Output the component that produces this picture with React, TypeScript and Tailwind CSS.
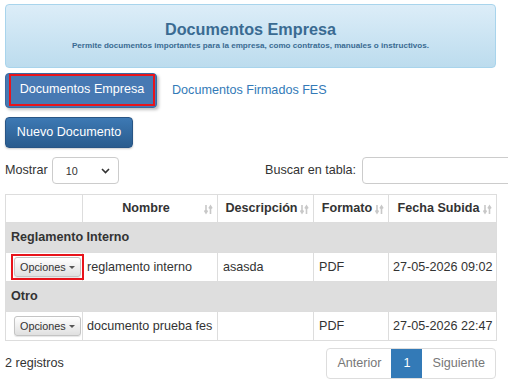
import React from "react";

type Row = { nombre: string; descripcion: string; formato: string; fecha: string; marked?: boolean };
type Group = { titulo: string; rows: Row[] };

const groups: Group[] = [
  {
    titulo: "Reglamento Interno",
    rows: [{ nombre: "reglamento interno", descripcion: "asasda", formato: "PDF", fecha: "27-05-2026 09:02", marked: true }],
  },
  {
    titulo: "Otro",
    rows: [{ nombre: "documento prueba fes", descripcion: "", formato: "PDF", fecha: "27-05-2026 22:47" }],
  },
];

function SortIcon() {
  return (
    <svg width="9" height="11" viewBox="0 0 9 11" className="absolute right-[4px] top-[9px]">
      <path d="M2 1v7M0.5 6.5L2 9l1.5-2.5" stroke="#c8c8c8" strokeWidth="1.6" fill="none" />
      <path d="M6.5 10V3M5 4.5L6.5 2 8 4.5" stroke="#c8c8c8" strokeWidth="1.6" fill="none" />
    </svg>
  );
}

function Opciones({ marked }: { marked?: boolean }) {
  return (
    <div className={`inline-flex ${marked ? "border-2 border-[#e8141b] p-[1px]" : "p-[3px]"}`}>
      <div className="flex items-center gap-[3px] h-[20px] px-[5px] border border-[#c4c4c4] rounded-[3px] bg-gradient-to-b from-white to-[#e0e0e0] text-[10.8px] text-[#333] shadow-[0_1px_1px_rgba(0,0,0,0.1)]">
        Opciones
        <span className="border-x-[3px] border-x-transparent border-t-[3px] border-t-[#555] mt-[1px]" />
      </div>
    </div>
  );
}

export default function App() {
  return (
    <div className="w-[508px] h-[381px] overflow-hidden bg-white text-[#333] font-['Liberation_Sans',Arial,sans-serif] text-[12.6px]">
      <div className="w-[491px] ml-[5px] pt-[4px]">
        {/* encabezado */}
        <div className="h-[64px] rounded-[4px] border border-[#a8d4ec] bg-gradient-to-b from-[#dcedf8] to-[#bcdcee] flex flex-col items-center pt-[14px] text-[#3a6b92]">
          <h1 className="text-[16.2px] font-bold leading-[20px]">Documentos Empresa</h1>
          <p className="text-[8.1px] font-bold leading-[10px] mt-[2px]">
            Permite documentos importantes para la empresa, como contratos, manuales o instructivos.
          </p>
        </div>

        {/* pestañas */}
        <div className="flex items-center mt-[4px] h-[36px]">
          <div className="w-[152px] h-[35px] rounded-[4px] bg-[#4779b3] border border-[#3a6aa0] shadow-[2px_2px_3px_rgba(0,0,0,0.25)] flex items-start pl-[3px]">
            <div className="w-[146px] h-[32px] border-2 border-[#e8141b] flex items-center justify-center text-white">
              Documentos Empresa
            </div>
          </div>
          <a className="ml-[15px] text-[#337ab7]">Documentos Firmados FES</a>
        </div>

        <button className="mt-[9px] w-[128px] h-[31px] rounded-[4px] border border-[#285585] bg-gradient-to-b from-[#3d79b4] to-[#2a5c8e] text-white text-[12.6px] shadow-[0_1px_2px_rgba(0,0,0,0.2)]">
          Nuevo Documento
        </button>

        {/* controles */}
        <div className="flex items-center mt-[9px] h-[27px]">
          <span>Mostrar</span>
          <div className="ml-[4px] w-[67px] h-[27px] border border-[#ccc] rounded-[4px] flex items-center justify-between pl-[13px] pr-[8px] text-[10.8px]">
            <span className="mt-[2px]">10</span>
            <svg width="9" height="6" viewBox="0 0 9 6">
              <path d="M1 1l3.5 3.5L8 1" stroke="#333" strokeWidth="1.6" fill="none" />
            </svg>
          </div>
          <span className="ml-auto mr-[6px]">Buscar en tabla:</span>
          <div className="w-[170px] h-[27px] border border-[#ccc] rounded-[4px] shrink-0 -mr-[36px]" />
        </div>

        {/* tabla */}
        <table className="mt-[10px] w-[491px] border-collapse table-fixed">
          <colgroup>
            <col className="w-[77px]" />
            <col className="w-[135px]" />
            <col className="w-[96px]" />
            <col className="w-[75px]" />
            <col className="w-[108px]" />
          </colgroup>
          <thead>
            <tr className="h-[28px]">
              <th className="border border-[#ddd]" />
              {["Nombre", "Descripción", "Formato", "Fecha Subida"].map((h) => (
                <th key={h} className="relative border border-[#ddd] font-bold text-center pr-[12px] pl-[4px] whitespace-nowrap">
                  {h}
                  <SortIcon />
                </th>
              ))}
            </tr>
          </thead>
          <tbody>
            {groups.map((g) => (
              <React.Fragment key={g.titulo}>
                <tr className="h-[30px] bg-[#dedede]">
                  <td colSpan={5} className="px-[5px] font-bold border-x border-[#ddd]">
                    {g.titulo}
                  </td>
                </tr>
                <tr className="h-[29px]">
                  <td className="border border-[#ddd] px-[5px]">
                    <Opciones marked={g.rows[0].marked} />
                  </td>
                  <td className="border border-[#ddd] px-[4px] whitespace-nowrap">{g.rows[0].nombre}</td>
                  <td className="border border-[#ddd] px-[5px]">{g.rows[0].descripcion}</td>
                  <td className="border border-[#ddd] px-[5px]">{g.rows[0].formato}</td>
                  <td className="border border-[#ddd] px-[4px] whitespace-nowrap">{g.rows[0].fecha}</td>
                </tr>
              </React.Fragment>
            ))}
          </tbody>
        </table>

        {/* pie */}
        <div className="flex items-center justify-between mt-[7px]">
          <span>2 registros</span>
          <div className="flex h-[31px] border border-[#ddd] rounded-[4px] overflow-hidden">
            <span className="px-[10px] flex items-center text-[#777]">Anterior</span>
            <span className="w-[31px] flex items-center justify-center bg-[#337ab7] text-white">1</span>
            <span className="px-[10px] flex items-center text-[#777]">Siguiente</span>
          </div>
        </div>
      </div>
    </div>
  );
}
